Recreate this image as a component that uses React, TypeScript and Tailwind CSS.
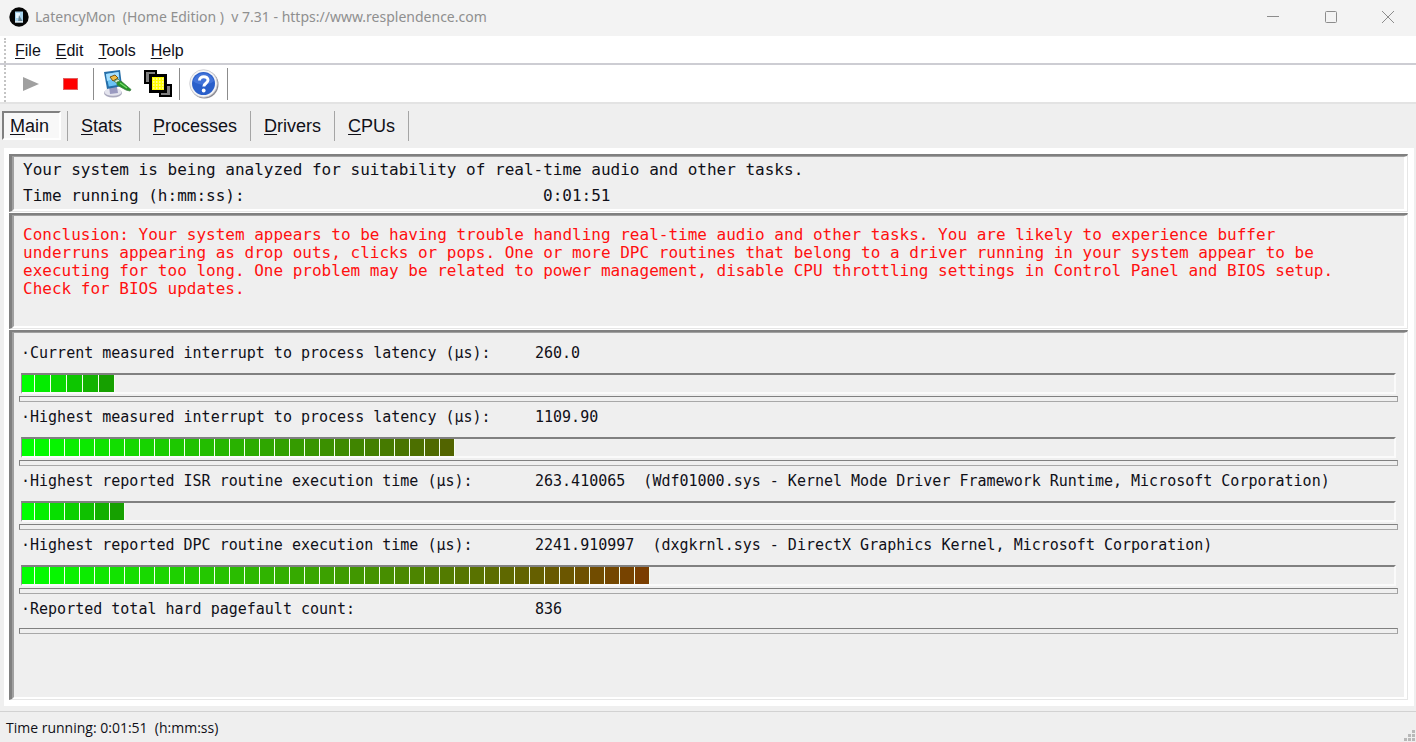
import React from 'react';
import { clsx } from 'clsx';

type Rgb = [number, number, number];

type Measurement = {
  label: string;
  value: string;
  detail?: string;
  segments?: number;
  endColor?: Rgb;
  wide?: boolean;
};

const MENUS = ['File', 'Edit', 'Tools', 'Help'];
const TABS = ['Main', 'Stats', 'Processes', 'Drivers', 'CPUs'];

const MEASUREMENTS: Measurement[] = [
  {
    label: 'Current measured interrupt to process latency (µs):',
    value: '260.0',
    segments: 6,
    endColor: [22, 160, 0],
    wide: true,
  },
  {
    label: 'Highest measured interrupt to process latency (µs):',
    value: '1109.90',
    segments: 29,
    endColor: [82, 100, 0],
  },
  {
    label: 'Highest reported ISR routine execution time (µs):',
    value: '263.410065',
    detail: '(Wdf01000.sys - Kernel Mode Driver Framework Runtime, Microsoft Corporation)',
    segments: 7,
    endColor: [22, 160, 0],
  },
  {
    label: 'Highest reported DPC routine execution time (µs):',
    value: '2241.910997',
    detail: '(dxgkrnl.sys - DirectX Graphics Kernel, Microsoft Corporation)',
    segments: 42,
    endColor: [122, 62, 0],
  },
  { label: 'Reported total hard pagefault count:', value: '836' },
];

// Label with its first letter underlined as the access key
const AccessLabel = ({ text }: { text: string }) => (
  <span>
    <span className="underline decoration-1 underline-offset-2">{text[0]}</span>
    {text.slice(1)}
  </span>
);

const AppIcon = () => (
  <svg width="20" height="20" viewBox="0 0 20 20" aria-hidden="true">
    <circle cx="10" cy="10" r="9.7" fill="#050505" />
    <rect x="6" y="4.5" width="8" height="11" fill="#a9d4ee" />
    <path d="M7 6h4v5H7z" fill="#e8f6ff" />
    <path d="M10 8l4 7h-5z" fill="#6b8795" />
    <path d="M6 14h8v1.5H6z" fill="#dfe8ec" />
  </svg>
);

const MonitorIcon = () => (
  <svg width="30" height="30" viewBox="0 0 30 30" aria-hidden="true">
    <ellipse cx="11" cy="24" rx="9" ry="4.5" fill="#aaa9bd" />
    <ellipse cx="11" cy="23" rx="8.5" ry="3.8" fill="#e4e4ee" />
    <path d="M7 17l8 1 1 6-8 1z" fill="#9a9ac0" />
    <path d="M2 3L18 1l2 16-15 3z" fill="#246da8" />
    <path d="M4 5l12.500-2 1.800 12.500-11.500 2z" fill="#6cc4f6" />
    <path d="M4 5l12.500-2 .5 5L5 12z" fill="#a4dfff" />
    <path d="M8 8l5-2 3 3-5 3z" fill="#f0bd45" stroke="#765415" strokeWidth="1" />
    <path d="M12 12l4-2 3 3-3 2z" fill="#d8edcf" stroke="#3d6d37" strokeWidth=".7" />
    <path d="M15 13l4-1 10 8.500-1 1.500-4-1-9-5z" fill="#239426" stroke="#3f7d42" strokeWidth=".8" />
    <path d="M18 14l7 5" stroke="#77de6b" strokeWidth="1.3" />
  </svg>
);

const WindowsIcon = () => (
  <svg width="28" height="28" viewBox="0 0 28 28" aria-hidden="true">
    <rect x="1" y="1" width="11" height="12" fill="#808080" stroke="#000" strokeWidth="2" />
    <rect x="16" y="15" width="11" height="11" fill="#808080" stroke="#000" strokeWidth="2" />
    <rect x="6.5" y="5.5" width="15" height="16" fill="#ff0" stroke="#000" strokeWidth="3" />
    <path
      d="M9 9h11M9 12h11M9 15h11M9 18h11"
      stroke="#fffbc0"
      strokeWidth="1.500"
      strokeDasharray="1.500 1.500"
    />
  </svg>
);

const HelpIcon = () => (
  <svg width="30" height="30" viewBox="0 0 30 30" aria-hidden="true">
    <circle cx="15.5" cy="15.5" r="14" fill="#8c8c94" />
    <circle cx="14.5" cy="14.5" r="13.8" fill="#f4f4f6" stroke="#c5c5cc" strokeWidth=".8" />
    <circle cx="14.5" cy="14.5" r="11.500" fill="#2a5fca" />
    <path d="M4 12a11 11 0 0 1 21 0c-6 5-15 5-21 0z" fill="#4374da" />
    <path
      d="M10.5 11.5c0-5 8.5-5 8.5-.4 0 3.2-4.2 3-4.2 6.5"
      fill="none"
      stroke="#fff"
      strokeWidth="3"
    />
    <circle cx="14.7" cy="21.5" r="1.9" fill="#fff" />
  </svg>
);

const Grip = () => (
  <div className="h-full border-l-2 border-dotted border-[#c4c4c4]" />
);

const ToolSeparator = () => <div className="h-8 w-px bg-[#8c8c8c]" />;

const TitleBar = () => (
  <header className="flex h-9 items-center bg-[#f3f3f3] pb-0.5 pl-[9px] text-[#8f8f8f]">
    <AppIcon />
    <h1 className="ml-1.5 flex-1 whitespace-pre font-['Noto_Sans','Open_Sans',sans-serif] text-sm">
      {'LatencyMon  (Home Edition )  v 7.31 - https://www.resplendence.com'}
    </h1>
    <button aria-label="Minimize" className="flex h-full w-[58px] items-center justify-center">
      <svg width="12" height="12" viewBox="0 0 12 12">
        <path d="M0 5.5h12" stroke="#8c8c8c" />
      </svg>
    </button>
    <button aria-label="Maximize" className="flex h-full w-[58px] items-center justify-center">
      <svg width="12" height="12" viewBox="0 0 12 12">
        <rect x=".5" y=".5" width="11" height="11" rx="1" fill="none" stroke="#8c8c8c" />
      </svg>
    </button>
    <button aria-label="Close" className="flex h-full w-[56px] items-center justify-center">
      <svg width="12" height="12" viewBox="0 0 12 12">
        <path d="M0 0l12 12M12 0L0 12" stroke="#8c8c8c" />
      </svg>
    </button>
  </header>
);

const MenuBar = () => (
  <nav className="flex h-[29px] items-center border-b-2 border-[#cdcdd3] bg-white pt-0.5 pl-1 text-base">
    <Grip />
    <div className="flex gap-[15px] pl-[9px]">
      {MENUS.map((menu) => (
        <button key={menu}>
          <AccessLabel text={menu} />
        </button>
      ))}
    </div>
  </nav>
);

const Toolbar = () => (
  <div className="flex h-[39px] items-center border-b-2 border-[#e3e3e3] bg-white pl-1">
    <Grip />
    <button aria-label="Start" className="ml-[17px]">
      <svg width="16" height="14" viewBox="0 0 16 14">
        <path d="M0 0l16 7-16 7z" fill="#a0a0a0" />
      </svg>
    </button>
    <button aria-label="Stop" className="mr-[15px] ml-6 h-3 w-[15px] border border-[#e06060] bg-[#f00]" />
    <ToolSeparator />
    <button aria-label="Options" className="ml-2">
      <MonitorIcon />
    </button>
    <button aria-label="Windows" className="mr-[7px] ml-3">
      <WindowsIcon />
    </button>
    <ToolSeparator />
    <button aria-label="Help" className="mr-2 ml-[9px]">
      <HelpIcon />
    </button>
    <ToolSeparator />
  </div>
);

const TabBar = () => (
  <div role="tablist" className="flex h-11 items-center pb-px pl-0.5 text-lg">
    {TABS.map((tab, i) => (
      <React.Fragment key={tab}>
        <button
          role="tab"
          aria-selected={i === 0}
          className={clsx(
            'h-[29px] leading-6',
            i === 0
              ? 'mr-1.5 w-[59px] border-2 border-t-[#808080] border-r-white border-b-white border-l-[#808080] bg-[#f8f8f8] pr-1'
              : 'min-w-[71px] px-[13px] text-left',
          )}
        >
          <AccessLabel text={tab} />
        </button>
        <div className="h-[30px] w-px bg-[#a5a5a5]" />
      </React.Fragment>
    ))}
  </div>
);

// Sunken panel with a double bevel
const Panel = ({ className, children }: { className?: string; children: React.ReactNode }) => (
  <section
    className={clsx(
      'flex flex-col border-t-2 border-r border-b border-l-3 border-t-[#808080] border-r-[#e6e6e6] border-b-[#e6e6e6] border-l-[#808080]',
      className,
    )}
  >
    <div className="flex-1 border-t border-r-3 border-b-2 border-l-2 border-t-[#a0a0a0] border-r-white border-b-white border-l-[#a0a0a0] bg-[#efefef]">
      {children}
    </div>
  </section>
);

const segmentColor = (end: Rgb, t: number) => {
  const r = Math.round(end[0] * t);
  const g = Math.round(255 + (end[1] - 255) * t);
  return `rgb(${r}, ${g}, ${end[2]})`;
};

const SegmentBar = ({ count, end, wide }: { count: number; end: Rgb; wide?: boolean }) => (
  <div className="mr-2 ml-[7px] flex h-[21px] border-2 border-l border-t-[#808080] border-r-[#fafafa] border-b-[#fafafa] border-l-[#909090]">
    {Array.from({ length: count }).map((_, i) => (
      <div
        key={i}
        className={clsx(
          'border-r border-[#f4fff0]',
          i === 0 ? 'w-[13px]' : wide ? 'w-[16px]' : 'w-[15px]',
        )}
        style={{ background: segmentColor(end, i / (count - 1)) }}
      />
    ))}
  </div>
);

const Divider = () => (
  <div className="mr-1.5 ml-[5px] h-1.5 border border-t-[#808080] border-r-[#a0a0a0] border-b-[#a8a8a8] border-l-[#808080]" />
);

const MeasurementRow = ({ item }: { item: Measurement }) => (
  <div>
    <div className="flex h-8 items-center whitespace-pre pb-0.5 pl-[7px] text-[15px]">
      <span className="w-[514px] shrink-0">·{item.label}</span>
      <span>{item.value}</span>
      {item.detail && <span>{'  ' + item.detail}</span>}
    </div>
    <div className="pb-0.5">
      {item.segments && item.endColor && (
        <div className="pt-[3px]">
          <SegmentBar count={item.segments} end={item.endColor} wide={item.wide} />
        </div>
      )}
    </div>
    <Divider />
  </div>
);

export default function App() {
  return (
    <div className="flex min-h-screen flex-col bg-[#efefef] font-['Liberation_Sans',Arial,sans-serif] text-[#101018]">
      <TitleBar />
      <MenuBar />
      <Toolbar />
      <TabBar />

      <main className="mr-0.5 ml-1 flex flex-1 flex-col gap-px bg-white pt-1.5 pr-1.5 pb-1.5 pl-[5px] font-['DejaVu_Sans_Mono',monospace] text-base">
        <Panel>
          <div className="px-[9px] text-base leading-[26px]">
            <p>Your system is being analyzed for suitability of real-time audio and other tasks.</p>
            <p className="flex">
              <span className="w-[520px]">Time running (h:mm:ss):</span>
              <span>0:01:51</span>
            </p>
          </div>
        </Panel>
        <Panel className="min-h-[116px]">
          <p className="ml-[9px] max-w-[1330px] pt-2.5 leading-[18px] text-[#ff1010]">
            Conclusion: Your system appears to be having trouble handling real-time audio and other
            tasks. You are likely to experience buffer underruns appearing as drop outs, clicks or
            pops. One or more DPC routines that belong to a driver running in your system appear to
            be executing for too long. One problem may be related to power management, disable CPU
            throttling settings in Control Panel and BIOS setup. Check for BIOS updates.
          </p>
        </Panel>
        <Panel className="flex-1">
          <div className="pt-[5px]">
            {MEASUREMENTS.map((item) => (
              <MeasurementRow key={item.label} item={item} />
            ))}
          </div>
        </Panel>
      </main>

      <footer className="mt-[5px] flex h-[31px] items-center justify-between border-t border-[#d2d2d2] pt-0.5 pl-1.5 font-['Open_Sans','Noto_Sans',sans-serif] text-sm">
        <span className="whitespace-pre">{'Time running: 0:01:51  (h:mm:ss)'}</span>
        <svg width="12" height="12" viewBox="0 0 12 12" className="self-end" aria-hidden="true">
          <path
            d="M8 0h3v3H8zM4 4h3v3H4zM8 4h3v3H8zM0 8h3v3H0zM4 8h3v3H4zM8 8h3v3H8z"
            fill="#b8b8b8"
          />
        </svg>
      </footer>
    </div>
  );
}
